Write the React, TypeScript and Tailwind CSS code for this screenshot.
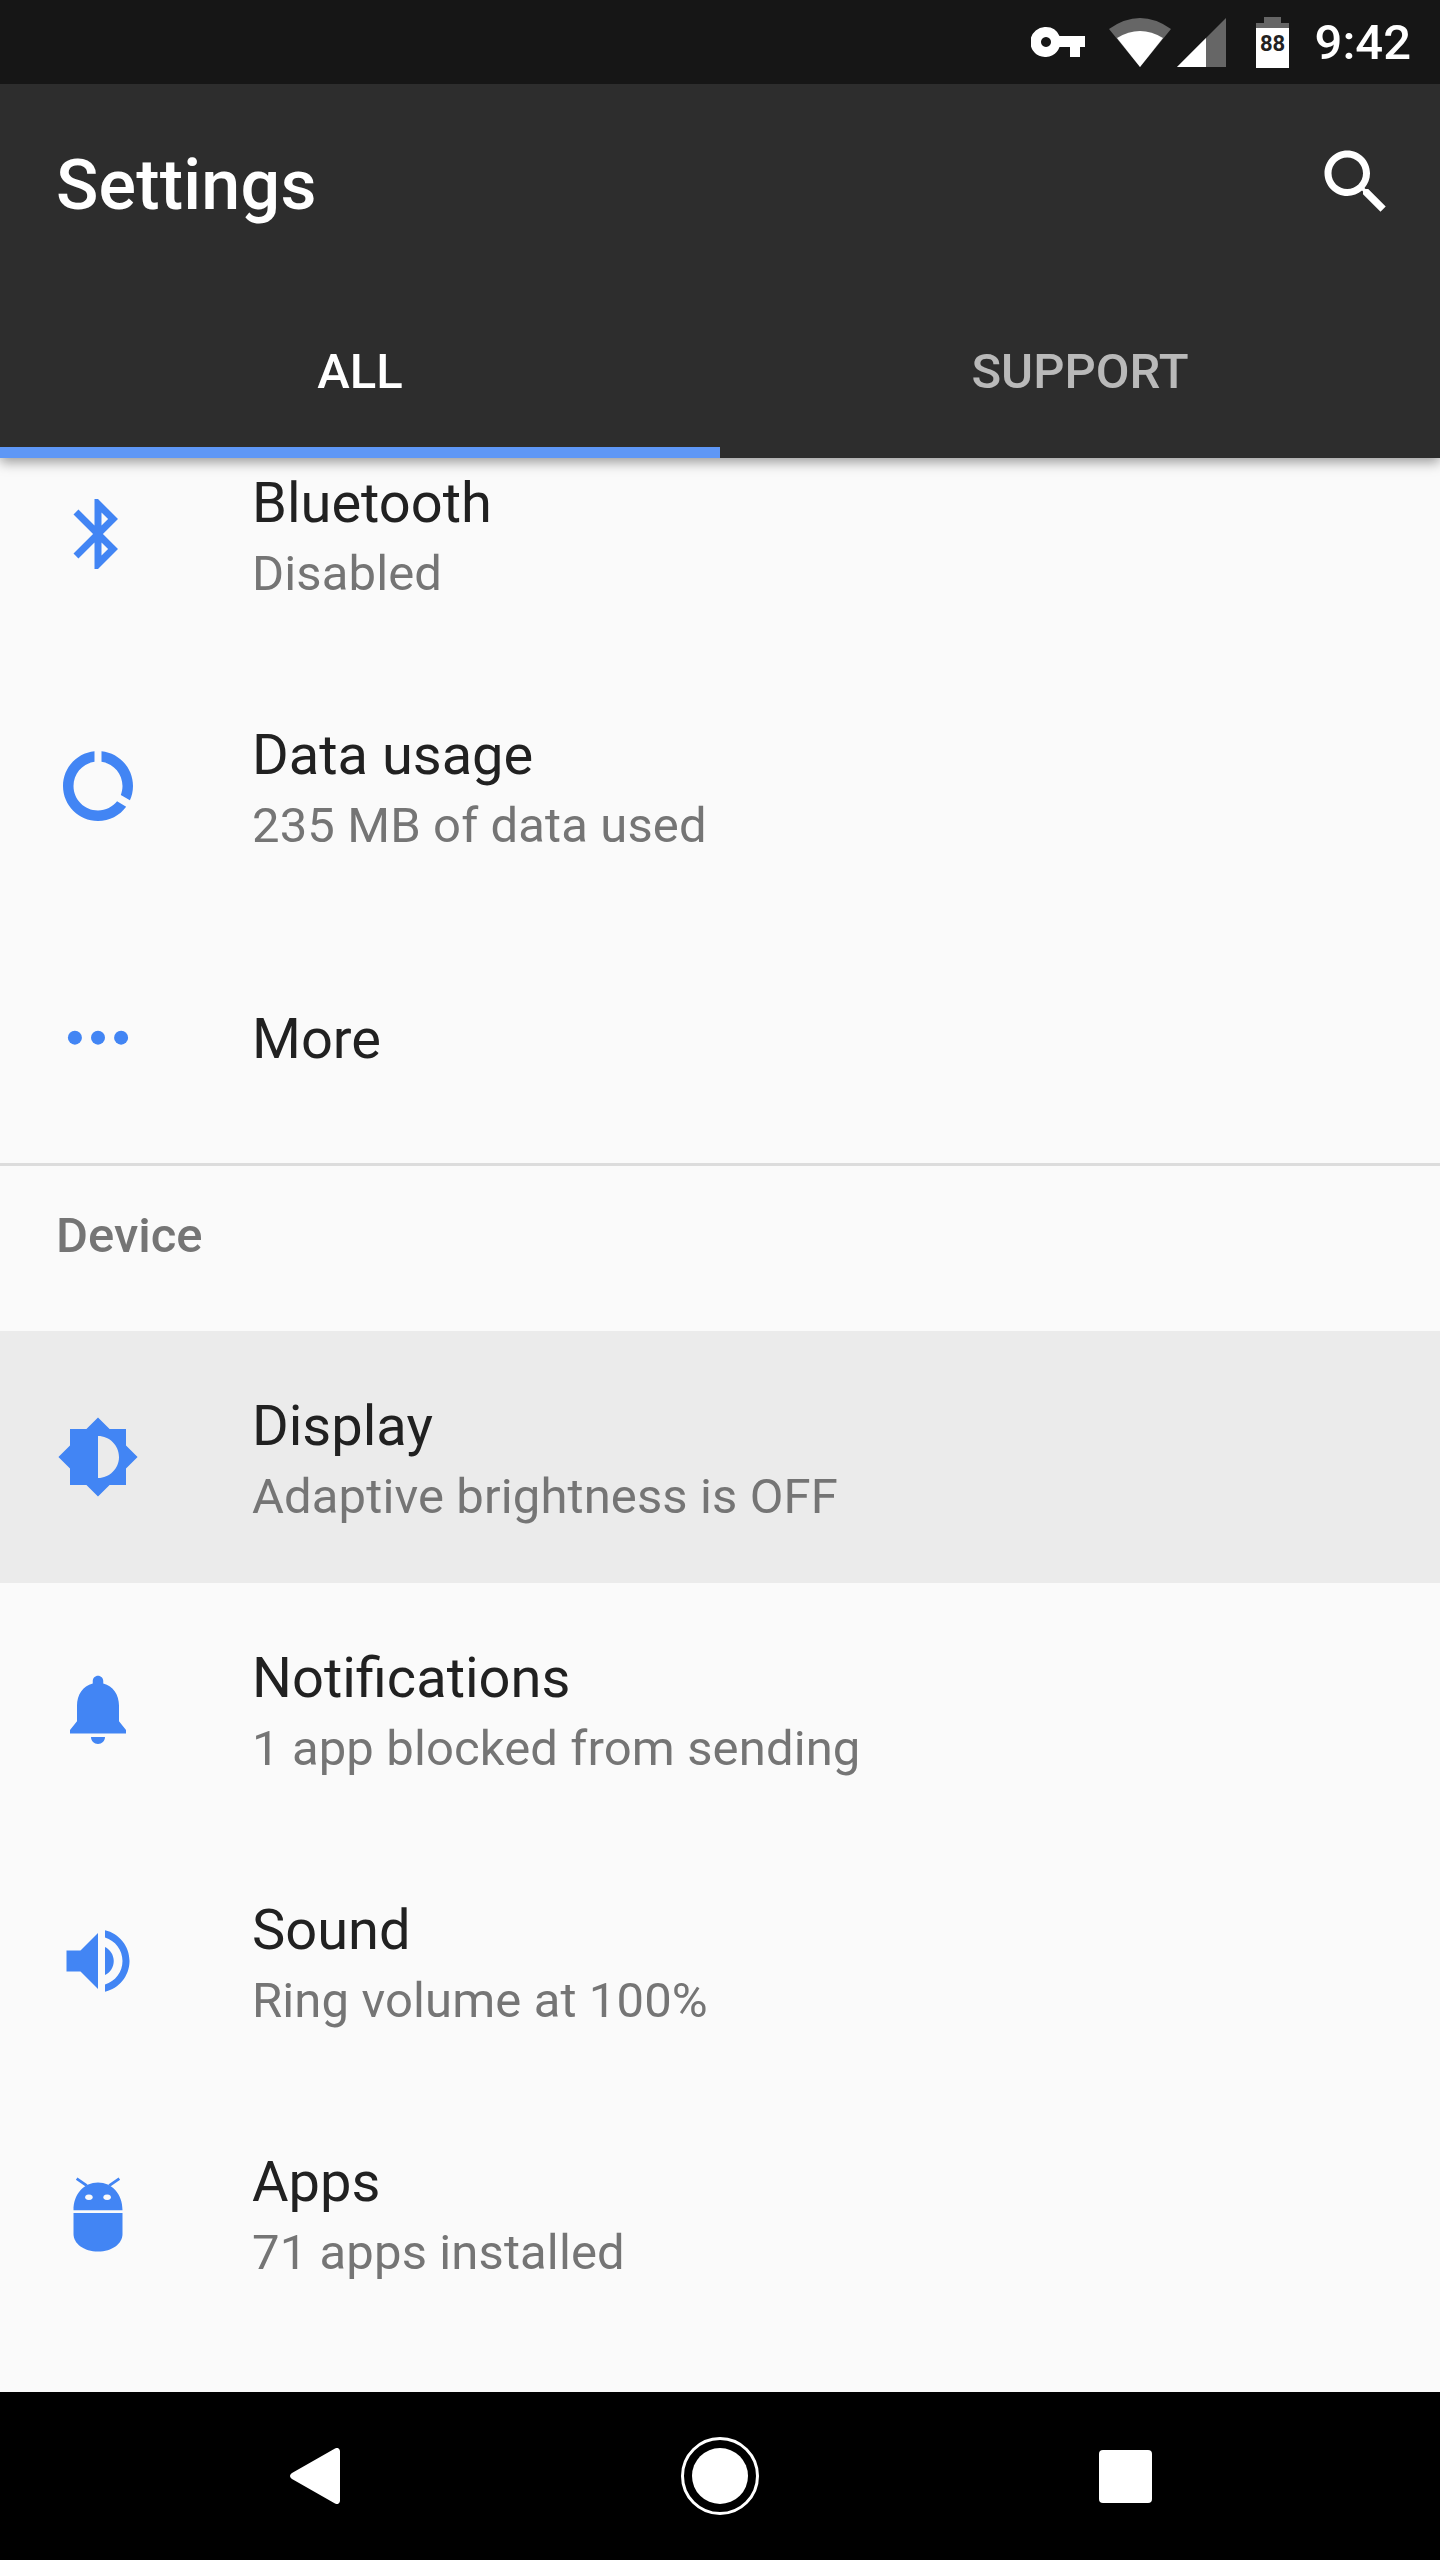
import React from "react";

const BLUE = "#4285f4";

function Icon({ d, rule }: { d: string; rule?: "evenodd" }) {
  return (
    <svg viewBox="0 0 24 24" className="w-[84px] h-[84px] shrink-0">
      <path d={d} fill={BLUE} fillRule={rule} />
    </svg>
  );
}

const Bluetooth = () => (
  <Icon d="M17.71 7.71L12 2h-1v7.59L6.41 5 5 6.41 10.59 12 5 17.59 6.41 19 11 14.41V22h1l5.71-5.71-4.3-4.29 4.3-4.29zM13 5.83l1.88 1.88L13 9.59V5.83zm1.88 10.46L13 18.17v-3.76l1.88 1.88z" />
);
const DataUsage = () => (
  <Icon d="M13 2.05v3.03c3.39.49 6 3.39 6 6.92 0 .9-.18 1.75-.48 2.54l2.6 1.53c.56-1.24.88-2.62.88-4.07 0-5.18-3.95-9.45-9-9.95zM12 19c-3.87 0-7-3.13-7-7 0-3.53 2.61-6.43 6-6.92V2.05c-5.06.5-9 4.76-9 9.95 0 5.52 4.47 10 9.99 10 3.31 0 6.24-1.61 8.06-4.09l-2.6-1.53C16.17 17.98 14.21 19 12 19z" />
);
const More = () => (
  <svg viewBox="0 0 24 24" className="w-[84px] h-[84px] shrink-0">
    <circle cx="5.4" cy="11.9" r="2" fill={BLUE} />
    <circle cx="12" cy="11.9" r="2" fill={BLUE} />
    <circle cx="18.6" cy="11.9" r="2" fill={BLUE} />
  </svg>
);
const Brightness = () => (
  <Icon
    rule="evenodd"
    d="M20 15.31L23.31 12 20 8.69V4h-4.69L12 .69 8.69 4H4v4.69L.69 12 4 15.31V20h4.69L12 23.31 15.31 20H20v-4.69zM12 18V6c3.31 0 6 2.69 6 6s-2.69 6-6 6z"
  />
);
const Bell = () => (
  <Icon d="M12 22c1.1 0 2-.9 2-2h-4c0 1.1.89 2 2 2zm6-6.5V11c0-3.07-1.64-5.64-4.5-6.32V4c0-.83-.67-1.5-1.5-1.5s-1.5.67-1.5 1.5v.68C7.63 5.36 6 7.92 6 11v4.5L4 18v1h16v-1l-2-2.5z" />
);
const Volume = () => (
  <Icon d="M3 9v6h4l5 5V4L7 9H3zm13.5 3c0-1.77-1.02-3.29-2.5-4.03v8.05c1.48-.73 2.5-2.25 2.5-4.02zM14 3.23v2.06c2.89.86 5 3.54 5 6.71s-2.11 5.85-5 6.71v2.06c4.01-.91 7-4.49 7-8.77s-2.99-7.86-7-8.77z" />
);
const Android = () => (
  <svg viewBox="0 0 24 24" className="w-[84px] h-[84px] shrink-0">
    <path d="M8.8 4.2L5.9 2.2M15.2 4.2l2.9-2" stroke={BLUE} strokeWidth="0.8" fill="none" />
    <path
      fillRule="evenodd"
      fill={BLUE}
      d="M5 11.200C5 6.600 8 3.300 12 3.300s7 3.300 7 7.900H5zM9.400 6.700a1.100 .8 0 1 0 .01 0zM14.600 6.700a1.100 .8 0 1 0 .01 0z"
    />
    <path fill={BLUE} d="M5 12h14v6c0 2.800-3 5-7 5s-7-2.200-7-5v-6z" />
  </svg>
);

function Row({
  icon,
  title,
  sub,
  className = "",
}: {
  icon: React.ReactNode;
  title: string;
  sub?: string;
  className?: string;
}) {
  return (
    <div className={`h-[252px] flex items-center pl-14 shrink-0 ${className}`}>
      {icon}
      <div className={sub ? "ml-[112px] pt-[7px] flex flex-col" : "ml-[112px] pt-[2px] flex flex-col"}>
        <div className="text-[56px] leading-[73px] text-[#212121]">{title}</div>
        {sub && <div className="text-[49px] leading-[68px] tracking-[0.12px] text-[#757575]">{sub}</div>}
      </div>
    </div>
  );
}

export default function App() {
  return (
    <div
      className="w-[1440px] h-[2560px] flex flex-col overflow-hidden bg-[#fafafa]"
      style={{ fontFamily: "Roboto, sans-serif" }}
    >
      <div className="relative z-10 shrink-0 bg-[#2d2d2d] shadow-[0_4px_12px_rgba(0,0,0,0.4)]">
        <div className="h-[84px] bg-[#161616] flex items-center justify-end pr-[29px]">
          <svg width="54" height="30" viewBox="0 0 54 30" className="mr-6 shrink-0">
            <path
              fill="#fff"
              fillRule="evenodd"
              d="M15 0a15 15 0 0 1 13.500 9H54v11h-5v10H39V20H28.500A15 15 0 1 1 15 0zm0 10a5 5 0 1 0 .01 0z"
            />
          </svg>
          <svg width="62" height="49" viewBox="0 0 62 49" className="mr-1.5 shrink-0">
            <path fill="#666" d="M0 11Q31-11 62 11L31 49z" />
            <path fill="#fff" d="M8 20Q31 6 54 20L31 49z" />
          </svg>
          <svg width="49" height="49" viewBox="0 0 49 49" className="mr-[30px] shrink-0">
            <path fill="#666" d="M0 49L49 0V49z" />
            <path fill="#fff" d="M0 49L29 20V49z" />
          </svg>
          <svg width="33" height="51" viewBox="0 0 33 51" className="mr-[26px] shrink-0">
            <path fill="#666" d="M8 0h17v6h8v5H0V6h8z" />
            <rect x="0" y="11" width="33" height="40" fill="#fff" />
            <text x="16.500" y="34" textAnchor="middle" fontSize="22" fontWeight="700" fill="#222" fontFamily="Roboto, sans-serif">
              88
            </text>
          </svg>
          <div className="text-[49px] leading-none font-medium text-white">9:42</div>
        </div>

        <div className="h-[196px] flex items-center justify-between pl-14 pr-[42px]">
          <div className="pt-[6px] text-[70px] leading-none font-medium tracking-[0.2px] text-white">Settings</div>
          <svg viewBox="0 0 24 24" className="w-[84px] h-[84px] shrink-0">
            <path
              fill="#fff"
              d="M15.5 14h-.79l-.28-.27C15.41 12.59 16 11.11 16 9.5 16 5.91 13.09 3 9.5 3S3 5.91 3 9.5 5.91 16 9.5 16c1.61 0 3.09-.59 4.23-1.57l.27.28v.79l5 4.99L20.49 19l-4.99-5zm-6 0C7.01 14 5 11.99 5 9.5S7.01 5 9.5 5 14 7.01 14 9.5 11.99 14 9.5 14z"
            />
          </svg>
        </div>

        <div className="h-[178px] flex">
          <div className="relative flex-1 pt-[6px] flex items-center justify-center text-[49px] font-medium text-white">
            ALL
            <div className="absolute left-0 right-0 bottom-0 h-[11px] bg-[#5e97f6]" />
          </div>
          <div className="flex-1 pt-[6px] flex items-center justify-center text-[49px] font-medium text-[#b9b9b9]">
            SUPPORT
          </div>
        </div>
      </div>

      <div className="flex-1 min-h-0 overflow-hidden flex flex-col">
        <Row className="-mt-[50px]" icon={<Bluetooth />} title="Bluetooth" sub="Disabled" />
        <Row icon={<DataUsage />} title="Data usage" sub="235 MB of data used" />
        <Row icon={<More />} title="More" />
        <div className="h-[3px] shrink-0 bg-[#dcdcdc] -mt-[1px]" />
        <div className="h-[165px] shrink-0 flex items-center pl-14 pb-[25px] text-[49px] font-medium text-[#757575]">
          Device
        </div>
        <Row className="bg-[#ebebeb]" icon={<Brightness />} title="Display" sub="Adaptive brightness is OFF" />
        <Row icon={<Bell />} title="Notifications" sub="1 app blocked from sending" />
        <Row icon={<Volume />} title="Sound" sub="Ring volume at 100%" />
        <Row icon={<Android />} title="Apps" sub="71 apps installed" />
      </div>

      <div className="h-[168px] shrink-0 bg-black flex justify-center">
        <div className="w-[405px] flex items-center justify-center">
          <svg width="50" height="56" viewBox="0 0 50 56">
            <path
              fill="#fff"
              d="M45 0.5c2.5-1.5 5 0 5 3v49c0 3-2.5 4.5-5 3L2 31c-2.600-2-2.600-4 0-6z"
            />
          </svg>
        </div>
        <div className="w-[405px] flex items-center justify-center">
          <svg width="78" height="78" viewBox="0 0 78 78">
            <circle cx="39" cy="39" r="37.500" fill="none" stroke="#fff" strokeWidth="3" />
            <circle cx="39" cy="39" r="28" fill="#fff" />
          </svg>
        </div>
        <div className="w-[405px] flex items-center justify-center">
          <div className="w-[53px] h-[53px] rounded-[4px] bg-white" />
        </div>
      </div>
    </div>
  );
}
